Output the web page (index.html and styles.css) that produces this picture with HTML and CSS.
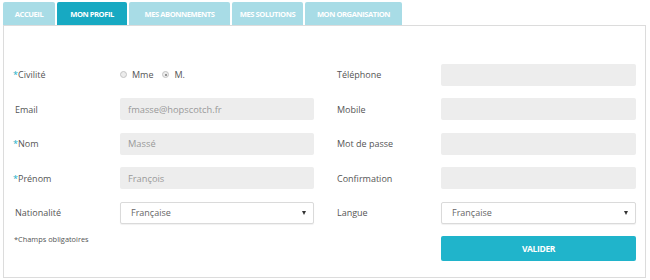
FILE: index.html
```html
<!DOCTYPE html>
<html lang="fr">
<head>
<meta charset="utf-8">
<title>Mon profil</title>
<link rel="stylesheet" href="styles.css">
</head>
<body>
<div class="page">
  <nav class="tabs">
    <a class="tab tab-accueil">ACCUEIL</a>
    <a class="tab tab-profil is-active">MON PROFIL</a>
    <a class="tab tab-abonnements">MES ABONNEMENTS</a>
    <a class="tab tab-solutions">MES SOLUTIONS</a>
    <a class="tab tab-organisation">MON ORGANISATION</a>
  </nav>
  <div class="panel">
    <form class="form">
      <label class="label"><span class="req">*</span>Civilité</label>
      <div class="radios">
        <span class="radio"></span><span class="radio-text">Mme</span>
        <span class="radio is-checked"></span><span class="radio-text">M.</span>
      </div>
      <label class="label label-right">Téléphone</label>
      <div class="input"></div>

      <label class="label label-opt">Email</label>
      <div class="input">fmasse@hopscotch.fr</div>
      <label class="label label-right">Mobile</label>
      <div class="input"></div>

      <label class="label"><span class="req">*</span>Nom</label>
      <div class="input">Massé</div>
      <label class="label label-right">Mot de passe</label>
      <div class="input"></div>

      <label class="label"><span class="req">*</span>Prénom</label>
      <div class="input">François</div>
      <label class="label label-right">Confirmation</label>
      <div class="input"></div>

      <label class="label label-opt">Nationalité</label>
      <div class="select">Française<span class="caret"></span></div>
      <label class="label label-right">Langue</label>
      <div class="select">Française<span class="caret"></span></div>

      <p class="note">*Champs obligatoires</p>
      <div></div>
      <div></div>
      <button type="button" class="btn">VALIDER</button>
    </form>
  </div>
</div>
</body>
</html>
```

FILE: styles.css
```css
* { box-sizing: border-box; }
html, body { margin: 0; padding: 0; background: #fff; }
body {
  font-family: "Open Sans", "DejaVu Sans", sans-serif;
  color: #555;
}
.page {
  padding: 2px 5px 0 3px;
  width: 650px;
}
.tabs {
  display: flex;
  gap: 2px;
  height: 23px;
}
.tab {
  display: flex;
  align-items: center;
  justify-content: center;
  height: 23px;
  background: #a8dce6;
  color: #fff;
  font-size: 7.6px;
  font-weight: 700;
  letter-spacing: -0.45px;
  border-radius: 2px 2px 0 0;
}
.tab.is-active { background: #17a9c2; }
.tab-accueil { width: 52px; }
.tab-profil { width: 70px; }
.tab-abonnements { width: 101px; }
.tab-solutions { width: 71px; }
.tab-organisation { width: 97px; }

.panel {
  width: 643px;
  height: 253px;
  border: 1px solid #dcdcdc;
  padding: 37.5px 9px 0 9px;
}
.form {
  display: grid;
  grid-template-columns: 107px 194px 127px 195px;
  grid-template-rows: 22px 22px 22px 22px 22px 25px;
  row-gap: 12.5px;
  margin: 0;
}
.label {
  display: flex;
  align-items: center;
  font-size: 9px;
  color: #555;
}
.label-opt { padding-left: 2px; }
.label-right { padding-left: 23px; }
.req { color: #1cb0c8; }

.radios {
  display: flex;
  align-items: center;
  font-size: 9px;
  color: #555;
}
.radio {
  width: 7px;
  height: 7px;
  border-radius: 50%;
  border: 1px solid #c4c4c4;
  background: #ececec;
  margin-right: 5px;
  position: relative;
}
.radio.is-checked::after {
  content: "";
  position: absolute;
  left: 1.5px;
  top: 1.5px;
  width: 2px;
  height: 2px;
  border-radius: 50%;
  background: #777;
}
.radio-text { margin-right: 9px; }

.input {
  background: #ededed;
  border-radius: 2px;
  display: flex;
  align-items: center;
  padding-left: 8px;
  font-size: 9.3px;
  color: #999;
}
.select {
  background: #fff;
  border: 1px solid #dadada;
  border-radius: 2px;
  box-shadow: 0 1px 1px rgba(0,0,0,0.06);
  display: flex;
  align-items: center;
  justify-content: space-between;
  padding: 0 7px 0 10px;
  font-size: 9px;
  color: #666;
}
.caret {
  width: 0;
  height: 0;
  border-left: 2.5px solid transparent;
  border-right: 2.5px solid transparent;
  border-top: 4px solid #333;
}
.note {
  margin: -2px 0 0 0;
  padding-left: 1px;
  font-size: 7.4px;
  line-height: 10px;
  color: #555;
}
.btn {
  border: 0;
  border-radius: 2px;
  background: #20b4cb;
  color: #fff;
  font-family: "Open Sans", "DejaVu Sans", sans-serif;
  font-weight: 700;
  font-size: 8.5px;
  letter-spacing: -0.35px;
  padding: 0;
  height: 25px;
}
```
